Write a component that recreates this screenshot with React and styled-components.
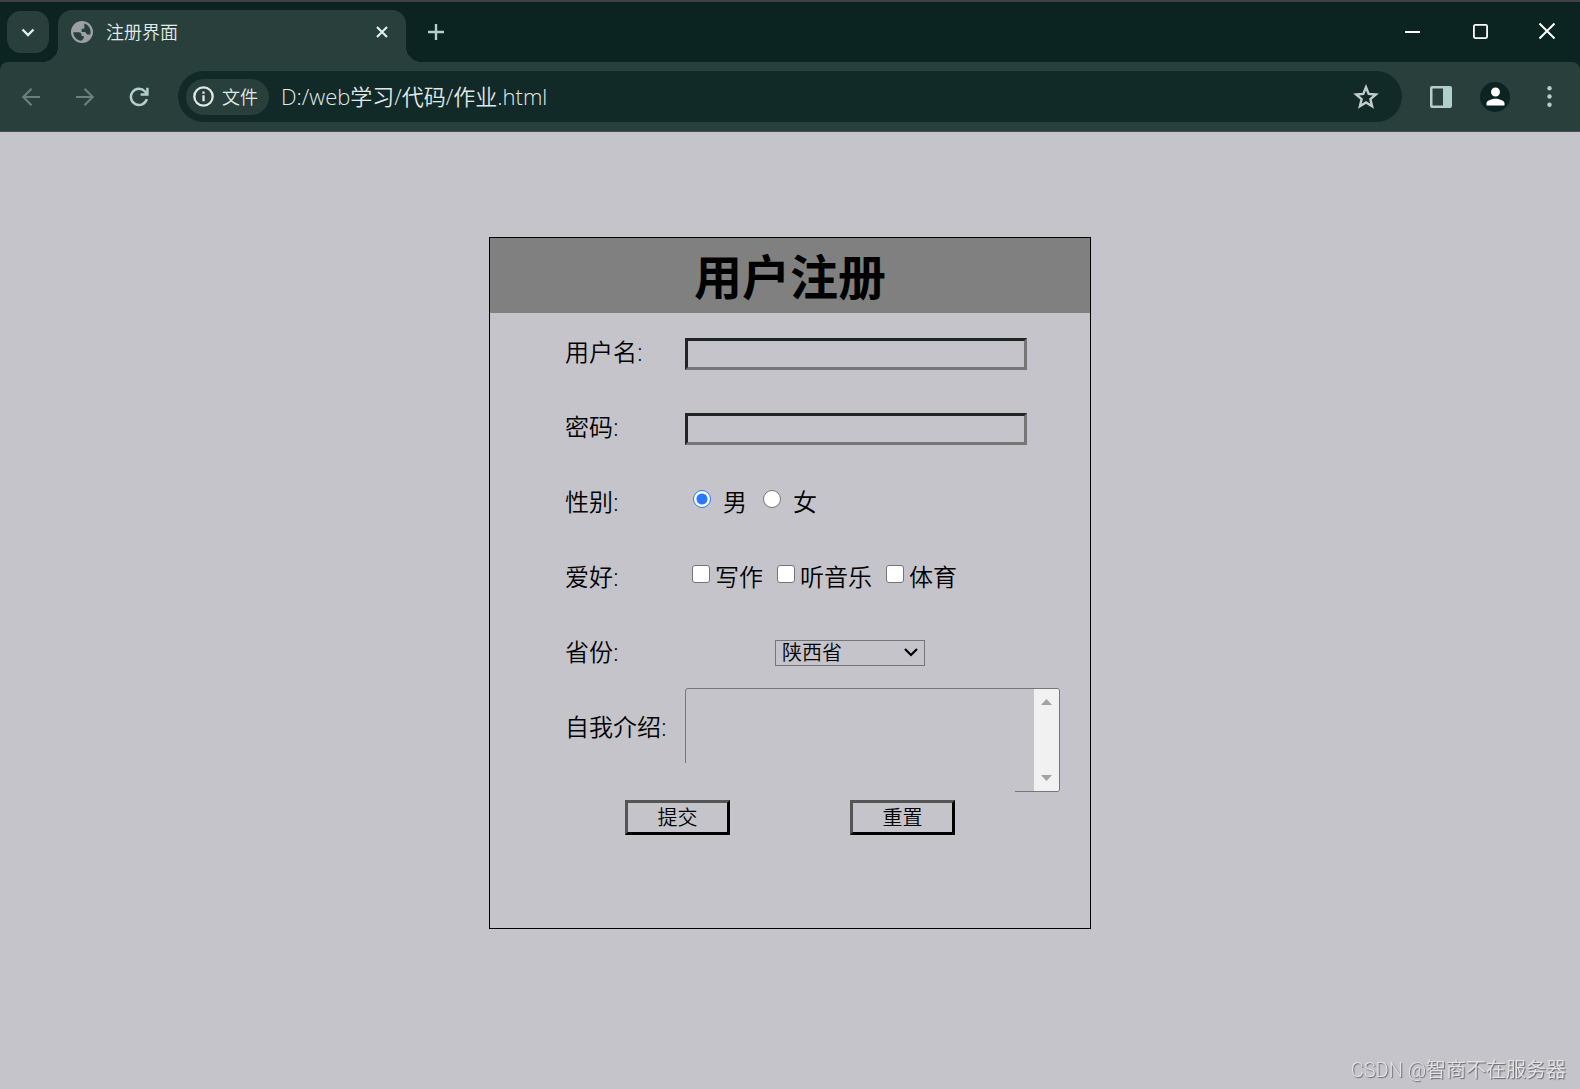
import React from 'react';
import styled, { createGlobalStyle } from 'styled-components';
import { MdPerson } from 'react-icons/md';

const GlobalStyle = createGlobalStyle`
  * {
    box-sizing: border-box;
  }
  body {
    margin: 0;
    background: #c5c4ca;
    font-family: 'Open Sans', 'Noto Sans CJK SC', sans-serif;
    font-weight: 350;
  }
  button, input, select, textarea {
    font-family: inherit;
    font-weight: inherit;
    margin: 0;
  }
`;

const Window = styled.div`
  min-height: 100vh;
  display: flex;
  flex-direction: column;
`;

const Chrome = styled.header`
  background: #0b2421;
  border-top: 2px solid #434044;
`;

const TabStrip = styled.div`
  display: flex;
  height: 60px;
  padding: 8px 0 0 7px;
`;

const IconButton = styled.button`
  display: flex;
  align-items: center;
  justify-content: center;
  width: ${props => props.$width || 54}px;
  height: ${props => props.$height || 44}px;
  padding: 0;
  border: 0;
  background: none;
  color: ${props => props.$color || '#b4cfcb'};
`;

const TabSearch = styled(IconButton)`
  margin: 1px 9px 0 0;
  border-radius: 14px;
  background: #283f3b;
`;

const Tab = styled.div`
  position: relative;
  display: flex;
  align-items: center;
  width: 348px;
  height: 52px;
  padding: 0 10px 8px 13px;
  border-radius: 14px 14px 0 0;
  background: #283f3b;
  color: #e1e9e7;
  font-size: 18px;
  line-height: 24px;

  &::before,
  &::after {
    content: '';
    position: absolute;
    bottom: 0;
    width: 16px;
    height: 16px;
  }
  &::before {
    right: 100%;
    background: radial-gradient(circle at 0 0, transparent 16px, #283f3b 16px);
  }
  &::after {
    left: 100%;
    background: radial-gradient(circle at 100% 0, transparent 16px, #283f3b 16px);
  }
`;

const TabTitle = styled.span`
  flex: 1;
  margin-left: 13px;
`;

const WindowButtons = styled.div`
  display: flex;
  margin-left: auto;
`;

const Toolbar = styled.div`
  display: flex;
  align-items: center;
  height: 70px;
  padding: 0 4px;
  border-bottom: 1px solid #43504f;
  border-radius: 8px 8px 0 0;
  background: #283f3b;
`;

const AddressBar = styled.div`
  flex: 1;
  display: flex;
  align-items: center;
  height: 51px;
  margin: 0 12px;
  padding: 0 23px 0 8px;
  border-radius: 26px;
  background: #122a27;
`;

const SiteChip = styled.button`
  display: flex;
  align-items: center;
  gap: 8px;
  height: 36px;
  padding: 0 11px 0 7px;
  border: 0;
  border-radius: 18px;
  background: #283f3b;
  color: #e1e9e7;
  font-size: 18px;
  line-height: 24px;
`;

const Address = styled.input`
  flex: 1;
  min-width: 0;
  padding: 0 0 2px 12px;
  border: 0;
  outline: 0;
  background: none;
  color: #e1e9e7;
  font-size: 22px;
  line-height: 30px;
`;

const Avatar = styled.span`
  display: flex;
  align-items: center;
  justify-content: center;
  width: 30px;
  height: 30px;
  border-radius: 50%;
  background: #0b2421;
  color: #fff;
`;

const Page = styled.main`
  flex: 1;
  padding: 105px 20px;
`;

const Card = styled.form`
  width: 602px;
  height: 692px;
  margin: 0 auto;
  border: 1px solid #000;
`;

const Title = styled.h1`
  margin: 0;
  padding-top: 2px;
  background: #808080;
  color: #000;
  font-size: 48px;
  font-weight: 700;
  line-height: 73px;
  text-align: center;
`;

const Rows = styled.div`
  display: flex;
  flex-direction: column;
  width: 450px;
  margin: 0 auto;
`;

const Row = styled.div`
  display: flex;
  align-items: ${props => props.$align || 'center'};
  height: 75px;
  font-size: 24px;
  line-height: 75px;
`;

const Name = styled.label`
  flex: 0 0 120px;
  padding-top: 1px;
  white-space: nowrap;
`;

const TextInput = styled.input`
  width: 342px;
  height: 32px;
  flex-shrink: 0;
  margin-top: 6px;
  border: 3px solid;
  border-color: #202422 #767676 #767676 #202422;
  border-radius: 0;
  background: transparent;
  font-size: 20px;
`;

const Choices = styled.div`
  display: flex;
  gap: ${props => props.$gap}px;
  padding-left: ${props => props.$indent}px;
`;

const Choice = styled.label`
  display: flex;
  align-items: center;
  gap: ${props => props.$gap}px;
  padding-top: 1px;
`;

const Mark = styled.input`
  appearance: none;
  width: 18px;
  height: 18px;
  margin-bottom: 4px;
  border: 1px solid #767676;
  border-radius: ${props => (props.type === 'radio' ? '50%' : '3px')};
  background: #fff;

  &[type='radio']:checked {
    border: 1px solid #2979ff;
    background: radial-gradient(circle, #2979ff 5px, #fff 6px);
  }
`;

const SelectBox = styled.div`
  display: grid;
  align-items: center;
  width: 150px;
  margin: 4px 0 0 90px;

  > * {
    grid-area: 1 / 1;
  }
  svg {
    justify-self: end;
    margin-right: 7px;
    pointer-events: none;
  }
`;

const Select = styled.select`
  appearance: none;
  width: 100%;
  height: 26px;
  padding: 0 0 0 6px;
  border: 1px solid #767676;
  border-radius: 0;
  background: transparent;
  color: #000;
  font-size: 20px;
  line-height: 24px;
`;

const IntroBox = styled.div`
  display: flex;
  flex: 0 0 375px;
  height: 104px;
  overflow: hidden;
  border: 1px solid #767676;
  border-radius: 3px;
`;

const Intro = styled.textarea`
  flex: 1;
  min-width: 0;
  padding: 3px;
  border: 0;
  outline: 0;
  resize: none;
  background: transparent;
  font-size: 20px;
`;

const ScrollTrack = styled.div`
  display: flex;
  flex-direction: column;
  align-items: center;
  justify-content: space-between;
  width: 25px;
  padding: 10px 0;
  background: #f1f1f1;
`;

const Actions = styled.div`
  display: flex;
  justify-content: space-around;
  padding: 37px 0;
  background: #c5c4ca;
`;

const ActionButton = styled.button`
  width: 105px;
  height: 35px;
  padding: 0;
  border: 3px solid;
  border-color: #555 #000 #000 #555;
  background: transparent;
  color: #000;
  font-size: 20px;
  line-height: 28px;
`;

const Watermark = styled.span`
  position: fixed;
  right: 14px;
  bottom: 4px;
  color: #e3e3e6;
  font-family: Roboto, 'Noto Sans CJK SC', sans-serif;
  font-size: 20px;
  line-height: 30px;
  text-shadow: 1px 1px 1px #666;
`;

const hobbies = ['写作', '听音乐', '体育'];

const LineIcon = ({ size, weight, d, children }) => (
  <svg
    width={size}
    height={size}
    viewBox={`0 0 ${size} ${size}`}
    fill="none"
    stroke="currentColor"
    strokeWidth={weight}
  >
    <path d={d} />
    {children}
  </svg>
);

const Globe = () => (
  <svg width="22" height="22" viewBox="0 0 24 24">
    <circle cx="12" cy="12" r="12" fill="#9aa0a6" />
    <path
      fill="#283f3b"
      d="M14.500 2.700c3.800 1 6.900 4.800 6.900 9.300 0 1-.2 1.800-.4 2.600h-3.500l-2-2.500h-3.900V8.500h2.900zM2.500 12.300h6c1.700 0 2.900 1.200 2.900 2.700v1.300h2.500v2.500l-2.400 2.700C6.500 21.500 2.500 17 2.500 12.300z"
    />
  </svg>
);

const BrowserBar = () => (
  <Chrome>
    <TabStrip>
      <TabSearch type="button" aria-label="搜索标签页" $width={42} $height={42} $color="#e1f0ed">
        <svg width="14" height="9" viewBox="0 0 14 9" fill="none" stroke="currentColor" strokeWidth="2.4">
          <path d="M1.5 1.5 7 7l5.500-5.500" />
        </svg>
      </TabSearch>
      <Tab>
        <Globe />
        <TabTitle>注册界面</TabTitle>
        <IconButton type="button" aria-label="关闭标签页" $width={28} $height={28} $color="#e1f0ed">
          <LineIcon size={12} weight={2.2} d="M1 1l10 10M11 1 1 11" />
        </IconButton>
      </Tab>
      <IconButton type="button" aria-label="新标签页" $width={60}>
        <LineIcon size={16} weight={2.4} d="M8 0v16M0 8h16" />
      </IconButton>
      <WindowButtons>
        <IconButton type="button" aria-label="最小化" $width={68} $height={42} $color="#fff">
          <LineIcon size={15} weight={2} d="M0 8h15" />
        </IconButton>
        <IconButton type="button" aria-label="最大化" $width={68} $height={42} $color="#fff">
          <svg width="15" height="15" viewBox="0 0 15 15" fill="none" stroke="currentColor" strokeWidth="1.800">
            <rect x="0.900" y="0.900" width="13.200" height="13.200" rx="1.500" />
          </svg>
        </IconButton>
        <IconButton type="button" aria-label="关闭" $width={66} $height={42} $color="#fff">
          <LineIcon size={16} weight={2} d="M.5.5l15 15M15.500.5l-15 15" />
        </IconButton>
      </WindowButtons>
    </TabStrip>
    <Toolbar>
      <IconButton type="button" aria-label="后退" $color="#6b7f7b">
        <LineIcon size={20} weight={2.2} d="M19 10H2.500M10.500 1.800 2.300 10l8.200 8.200" />
      </IconButton>
      <IconButton type="button" aria-label="前进" $color="#6b7f7b">
        <LineIcon size={20} weight={2.2} d="M1 10h16.500M9.500 1.800l8.200 8.200-8.200 8.200" />
      </IconButton>
      <IconButton type="button" aria-label="重新加载">
        <LineIcon size={20} weight={2.5} d="M17.800 12.200A8.100 8.100 0 1 1 16 4.500l2 2.300M18.400.8v6.800h-6.800" />
      </IconButton>
      <AddressBar>
        <SiteChip type="button">
          <LineIcon size={21} weight={2.3} d="M10.500 9.300v6M10.500 5.500v2.300">
            <circle cx="10.500" cy="10.500" r="9.200" />
          </LineIcon>
          文件
        </SiteChip>
        <Address aria-label="地址" defaultValue="D:/web学习/代码/作业.html" />
        <IconButton type="button" aria-label="收藏" $width={26} $height={28} $color="#c3ccca">
          <LineIcon
            size={26}
            weight={2.4}
            d="M13 3.200l2.700 6.700 7.200.6-5.500 4.700 1.700 7-6.100-3.700-6.100 3.700 1.700-7-5.500-4.700 7.200-.6z"
          />
        </IconButton>
      </AddressBar>
      <IconButton type="button" aria-label="侧边栏">
        <svg width="22" height="22" viewBox="0 0 22 22">
          <path
            fill="currentColor"
            fillRule="evenodd"
            d="M2 0h18a2 2 0 0 1 2 2v18a2 2 0 0 1-2 2H2a2 2 0 0 1-2-2V2a2 2 0 0 1 2-2zm.5 2.500v17H13v-17z"
          />
        </svg>
      </IconButton>
      <IconButton type="button" aria-label="个人资料">
        <Avatar>
          <MdPerson size={27} />
        </Avatar>
      </IconButton>
      <IconButton type="button" aria-label="更多">
        <svg width="5" height="21" viewBox="0 0 5 21" fill="currentColor">
          <circle cx="2.500" cy="2.300" r="2.200" />
          <circle cx="2.500" cy="10.500" r="2.200" />
          <circle cx="2.500" cy="18.700" r="2.200" />
        </svg>
      </IconButton>
    </Toolbar>
  </Chrome>
);

class App extends React.Component {
  render() {
    return (
      <Window>
        <GlobalStyle />
        <BrowserBar />
        <Page>
          <Card onSubmit={e => e.preventDefault()}>
            <Title>用户注册</Title>
            <Rows>
              <Row>
                <Name htmlFor="username">用户名:</Name>
                <TextInput id="username" type="text" />
              </Row>
              <Row>
                <Name htmlFor="password">密码:</Name>
                <TextInput id="password" type="password" />
              </Row>
              <Row>
                <Name as="span">性别:</Name>
                <Choices $gap={16} $indent={8}>
                  <Choice $gap={12}>
                    <Mark type="radio" name="gender" defaultChecked />男
                  </Choice>
                  <Choice $gap={12}>
                    <Mark type="radio" name="gender" />女
                  </Choice>
                </Choices>
              </Row>
              <Row>
                <Name as="span">爱好:</Name>
                <Choices $gap={14} $indent={7}>
                  {hobbies.map(hobby => (
                    <Choice key={hobby} $gap={5}>
                      <Mark type="checkbox" name="hobby" />
                      {hobby}
                    </Choice>
                  ))}
                </Choices>
              </Row>
              <Row>
                <Name htmlFor="province">省份:</Name>
                <SelectBox>
                  <Select id="province">
                    <option>陕西省</option>
                  </Select>
                  <svg width="14" height="9" viewBox="0 0 14 9" fill="none" stroke="#000" strokeWidth="2.200">
                    <path d="M1 1l6 6 6-6" />
                  </svg>
                </SelectBox>
              </Row>
              <Row $align="flex-start">
                <Name htmlFor="intro">自我介绍:</Name>
                <IntroBox>
                  <Intro id="intro" />
                  <ScrollTrack>
                    <svg width="11" height="6" viewBox="0 0 11 6" fill="#a3a3a3">
                      <path d="M5.500 0 11 6H0z" />
                    </svg>
                    <svg width="11" height="6" viewBox="0 0 11 6" fill="#a3a3a3">
                      <path d="M0 0h11L5.500 6z" />
                    </svg>
                  </ScrollTrack>
                </IntroBox>
              </Row>
              <Actions>
                <ActionButton type="submit">提交</ActionButton>
                <ActionButton type="reset">重置</ActionButton>
              </Actions>
            </Rows>
          </Card>
        </Page>
        <Watermark>CSDN @智商不在服务器</Watermark>
      </Window>
    );
  }
}

export default App;
